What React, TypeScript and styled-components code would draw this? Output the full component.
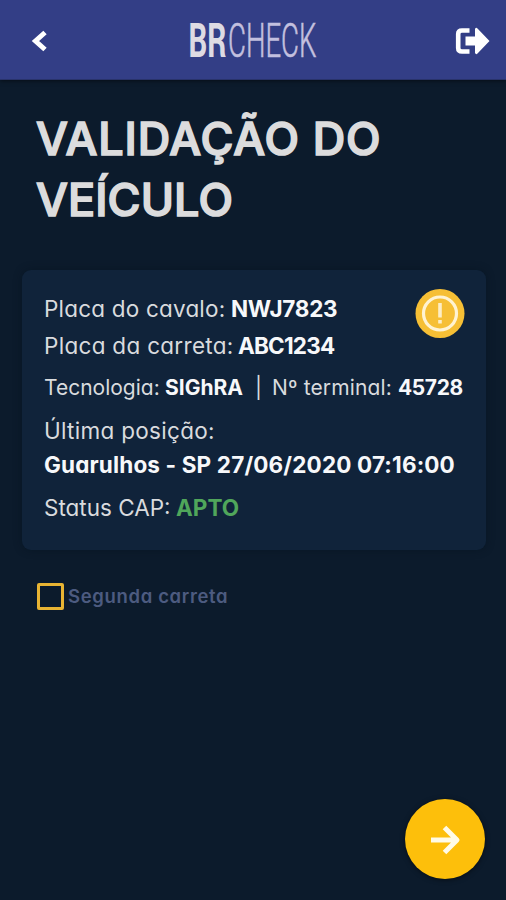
import React from "react";
import styled, { createGlobalStyle } from "styled-components";

const GlobalStyle = createGlobalStyle`
  * { box-sizing: border-box; }
  body { margin: 0; background: #0c1b2c; }
`;

const Screen = styled.main`
  width: 506px;
  height: 900px;
  display: flex;
  flex-direction: column;
  overflow: hidden;
  background: #0c1b2c;
  color: #d9dbde;
  font-family: Inter, "Liberation Sans", sans-serif;
  font-feature-settings: "cv11", "ss03";
`;

const Header = styled.header`
  height: 80px;
  flex: none;
  display: flex;
  align-items: center;
  justify-content: space-between;
  padding: 3px 15px 0 30px;
  background: #333e86;
  border-bottom: 1px solid #29336b;
  box-shadow: 0 1px 4px rgba(0, 0, 0, 0.5);
`;

const IconButton = styled.button`
  display: flex;
  padding: 0;
  border: 0;
  background: none;
  color: #fff;
`;

const Logo = styled.svg`
  display: block;
  margin-left: 3px;
`;

const Title = styled.h1`
  margin: 28px 36px 0;
  font-size: 45px;
  line-height: 61px;
  font-weight: 500;
  color: #dcdcdd;
  -webkit-text-stroke: 1.6px #dcdcdd;
  paint-order: stroke;
  stroke-linejoin: round;
`;

const TitleLine = styled.span<{ $track: number }>`
  display: block;
  white-space: nowrap;
  letter-spacing: ${(p) => p.$track}px;
`;

const Card = styled.section`
  display: flex;
  justify-content: space-between;
  height: 280px;
  margin: 40px 20px 0 22px;
  padding: 20.5px 22px 0;
  border-radius: 9px;
  background: #10233a;
  box-shadow: 0 0 8px rgba(5, 18, 28, 0.45);
`;

const Details = styled.div`
  width: 370px;
`;

const Row = styled.div<{ $h: number; $size?: number }>`
  display: flex;
  align-items: center;
  height: ${(p) => p.$h}px;
  font-size: ${(p) => p.$size ?? 22.5}px;
  white-space: pre;
`;

const Label = styled.span<{ $w: number; $track?: number }>`
  flex: none;
  width: ${(p) => p.$w}px;
  font-weight: 380;
  letter-spacing: ${(p) => p.$track ?? 0}px;
`;

const Value = styled.strong<{ $w?: number; $track?: number; $color?: string }>`
  flex: none;
  width: ${(p) => (p.$w ? `${p.$w}px` : "auto")};
  font-weight: 680;
  letter-spacing: ${(p) => p.$track ?? 0}px;
  color: ${(p) => p.$color ?? "#f7f8fa"};
`;

const Alert = styled.svg`
  flex: none;
  margin: -2px -1px 0 0;
`;

const CheckRow = styled.label`
  display: flex;
  align-items: center;
  gap: 4px;
  height: 28px;
  margin: 32px 0 0 37px;
  font-size: 18.5px;
  font-weight: 600;
  color: #4d5b80;
`;

const Box = styled.span`
  width: 27px;
  height: 27px;
  border: 3px solid #e8b433;
  border-radius: 2px;
`;

const CheckText = styled.span`
  letter-spacing: 0.65px;
`;

const NextButton = styled.button`
  display: flex;
  align-items: center;
  justify-content: center;
  width: 80px;
  height: 80px;
  margin: auto 21px 21px auto;
  padding: 0;
  border: 0;
  border-radius: 50%;
  background: #fdbf0b;
  box-shadow: 0 1px 5px rgba(0, 0, 0, 0.5);
`;

export default function App() {
  return (
    <>
      <GlobalStyle />
      <Screen>
        <Header>
          <IconButton aria-label="Voltar">
            <svg width="20" height="24" viewBox="0 0 20 24">
              <path d="M15 3.500 5.500 12l9.500 8.500" fill="none" stroke="#fff" strokeWidth="5" />
            </svg>
          </IconButton>
          <Logo width="134" height="64" viewBox="0 0 134 64" fontFamily="Roboto, sans-serif">
            <text transform="translate(1.500 48) scale(.633 1)" fontSize="47.5" fontWeight="700" fill="#dedbe3" textLength="60" lengthAdjust="spacingAndGlyphs">BR</text>
            <text transform="translate(41 48) scale(.593 1)" fontSize="47.5" fontWeight="300" fill="#c3c0df" stroke="#c3c0df" strokeWidth=".6" textLength="149" lengthAdjust="spacingAndGlyphs">CHECK</text>
          </Logo>
          <IconButton aria-label="Sair">
            <svg width="36" height="28" viewBox="0 0 36 28">
              <path d="M14.500 3.500H7Q3.200 3.500 3.200 7V21Q3.200 24.500 7 24.500H14.500" fill="none" stroke="#fff" strokeWidth="4.600" />
              <path d="M10.500 9.500H20V2Q21 0 22.500 1.500L34.500 14 22.500 26.500Q21 28 20 26V18.500H10.500Z" fill="#fff" />
            </svg>
          </IconButton>
        </Header>
        <Title>
          <TitleLine $track={0.85}>VALIDAÇÃO DO</TitleLine>
          <TitleLine $track={0.1}>VEÍCULO</TitleLine>
        </Title>
        <Card>
          <Details>
            <Row $h={36.5}>
              <Label $w={187} $track={0.2}>Placa do cavalo:</Label>
              <Value $track={-0.3}>NWJ7823</Value>
            </Row>
            <Row $h={36.5}>
              <Label $w={194} $track={0.3}>Placa da carreta:</Label>
              <Value $track={-0.8}>ABC1234</Value>
            </Row>
            <Row $h={48} $size={21}>
              <Label $w={121}>Tecnologia:</Label>
              <Value $w={90}>SIGhRA</Value>
              <Label $w={17}>|</Label>
              <Label $w={126} $track={0.15}>Nº terminal:</Label>
              <Value $track={-0.4}>45728</Value>
            </Row>
            <Row $h={38}>
              <Label $w={190} $track={0.3}>Última posição:</Label>
            </Row>
            <Row $h={30.4}>
              <Value $track={0.15}>Guarulhos - SP 27/06/2020 07:16:00</Value>
            </Row>
            <Row $h={56}>
              <Label $w={132}>Status CAP:</Label>
              <Value $color="#50a65b">APTO</Value>
            </Row>
          </Details>
          <Alert width="50" height="50" viewBox="0 0 50 50">
            <circle cx="25" cy="24.500" r="24.500" fill="#f6bf35" />
            <circle cx="25" cy="24.500" r="16.500" fill="none" stroke="#fff3d2" strokeWidth="3.200" />
            <path d="M25 14V28.500M25 31V34.500" stroke="#fdeec6" strokeWidth="3.600" />
          </Alert>
        </Card>
        <CheckRow>
          <Box />
          <CheckText>Segunda carreta</CheckText>
        </CheckRow>
        <NextButton aria-label="Avançar">
          <svg width="32" height="32" viewBox="0 0 32 32">
            <path d="M2 17H28M15.500 4.500 28 17 15.500 29.500" fill="none" stroke="#fffbe8" strokeWidth="5" strokeLinejoin="round" />
          </svg>
        </NextButton>
      </Screen>
    </>
  );
}
